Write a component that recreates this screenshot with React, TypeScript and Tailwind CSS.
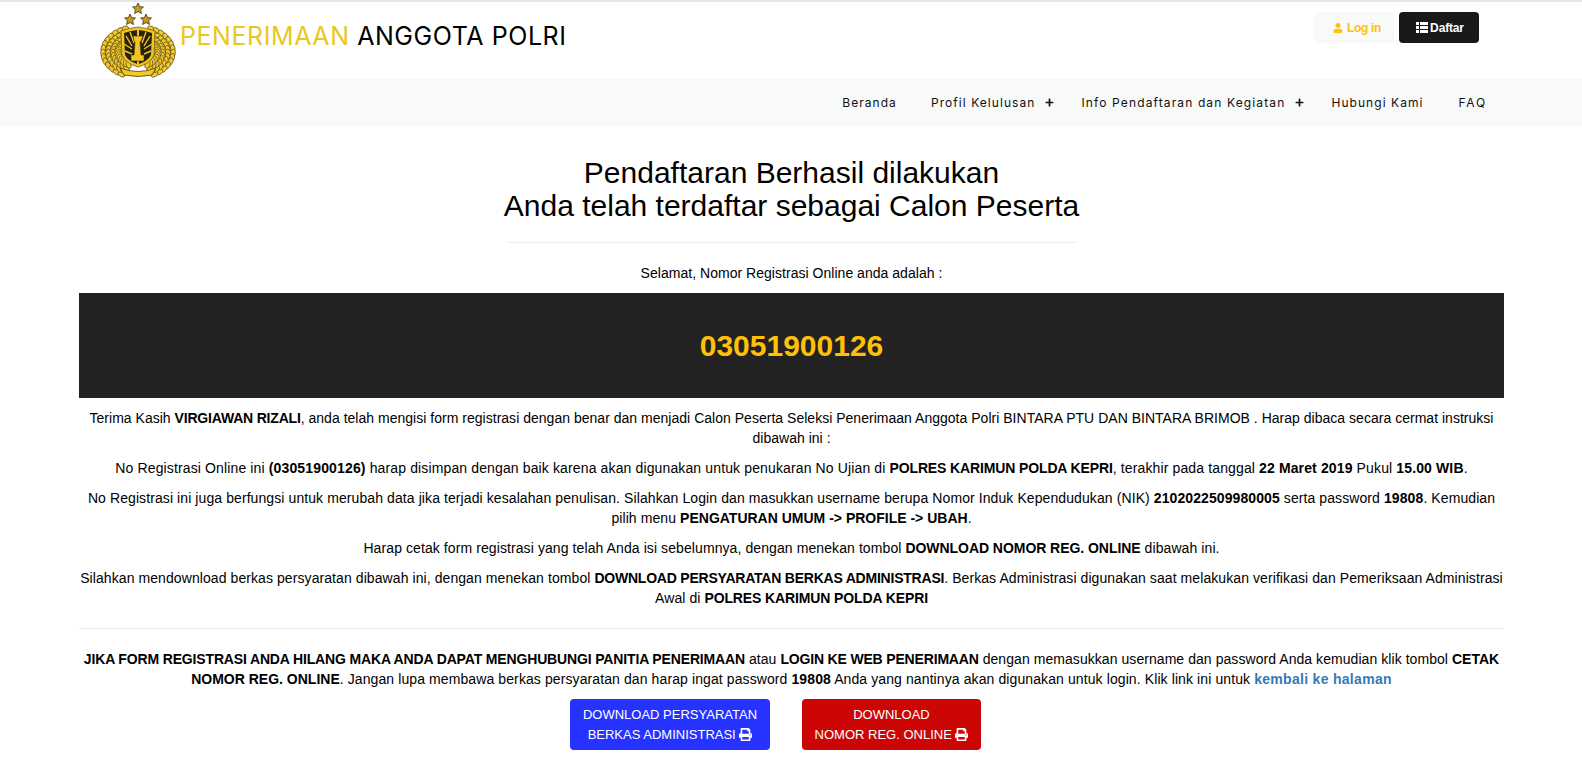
import type { ReactNode } from 'react';
import { FaUser, FaPrint, FaPlus } from 'react-icons/fa';

const STAR = 'l1.6 3.6 3.9.4-2.9 2.6.8 3.9-3.4-2-3.4 2 .8-3.9-2.9-2.6 3.9-.4z';

// wreath leaves, rows following the arc round the shield
const leaves: { x: number; y: number; r: number }[] = [];
[35, 30, 25, 20].forEach((radius, row) => {
  for (let a = 112; a <= 248; a += 10) {
    const rad = (a * Math.PI) / 180;
    leaves.push({
      x: 38 + Math.cos(rad) * radius,
      y: 52 - Math.sin(rad) * radius * 0.72,
      r: 180 - a + row * 14,
    });
  }
});

function Logo() {
  return (
    <svg width="80" height="78" viewBox="0 0 80 78" className="shrink-0 -mt-[2px]">
      <path d={`M38 3${STAR}`} fill="#c79a1e" stroke="#3a3010" strokeWidth="0.8" />
      <path d={`M30 14${STAR}`} fill="#c79a1e" stroke="#3a3010" strokeWidth="0.8" />
      <path d={`M46 14${STAR}`} fill="#c79a1e" stroke="#3a3010" strokeWidth="0.8" />
      {leaves.map((l, i) => (
        <g key={i}>
          <ellipse cx={l.x} cy={l.y} rx="2.4" ry="3.8" transform={`rotate(${l.r} ${l.x} ${l.y})`} fill="#f4cb2e" stroke="#5a4a1a" strokeWidth="0.7" />
          <ellipse cx={76 - l.x} cy={l.y} rx="2.4" ry="3.8" transform={`rotate(${-l.r} ${76 - l.x} ${l.y})`} fill="#f4cb2e" stroke="#5a4a1a" strokeWidth="0.7" />
        </g>
      ))}
      <path d="M20 68q18 7 36 0l-4 7q-14 3-28 0z" fill="#f5c928" stroke="#4a3d14" strokeWidth="0.8" />
      <path d="M21 31q8-3 17-4 9 1 17 4l-1 24q-3 8-16 12-13-4-16-12z" fill="#f3c520" stroke="#7a6318" strokeWidth="0.8" />
      <path d="M24 33q6-2 13-3l0 34q-9-3-12-9z M39 30q7 1 13 3l-1 22q-3 6-12 9z" fill="#262113" />
      <path d="M26 36l6 10M30 32l4 11M50 36l-6 10M46 32l-4 11M24 44l8 5M52 44l-8 5M25 51l7 3M51 51l-7 3" stroke="#f3c520" strokeWidth="1.4" />
      <path d="M33 36h10l-2 5-1 1 1 13h3v6h-13v-6h3l1-13-1-1z" fill="#f3c520" stroke="#3a3010" strokeWidth="0.6" />
    </svg>
  );
}

function ListIcon() {
  return (
    <svg width="12" height="11" viewBox="0 0 12 11" fill="currentColor" className="shrink-0">
      <path d="M0 0h3v3H0zM4 0h8v3H4zM0 4h3v3H0zM4 4h8v3H4zM0 8h3v3H0zM4 8h8v3H4z" />
    </svg>
  );
}

const Strong = ({ children, className = '' }: { children: ReactNode; className?: string }) => (
  <b className={`font-bold ${className}`}>{children}</b>
);

function Nav() {
  const itemClass = "font-['Inter',sans-serif] text-[12px] text-[#111] leading-none";
  return (
    <nav className="h-[47px] bg-[#f8f9f9] flex items-center justify-end pr-[95px]">
      <a className={`${itemClass} tracking-[1.06px] mr-[34px]`}>Beranda</a>
      <a className={`${itemClass} tracking-[1.06px]`}>Profil Kelulusan</a>
      <FaPlus className="text-[9px] text-[#111] ml-[10px] mr-[27px]" />
      <a className={`${itemClass} tracking-[1.13px]`}>Info Pendaftaran dan Kegiatan</a>
      <FaPlus className="text-[9px] text-[#111] ml-[10px] mr-[27px]" />
      <a className={`${itemClass} tracking-[1.06px] mr-[35px]`}>Hubungi Kami</a>
      <a className={`${itemClass} tracking-[1.8px]`}>FAQ</a>
    </nav>
  );
}

export default function App() {
  return (
    <div className="min-h-[766px] bg-white font-['Liberation_Sans',Arial,sans-serif] text-[14px] leading-[20px] text-black border-t-2 border-[#e6e6e6]">
      {/* Header */}
      <header className="h-[77px] flex justify-between">
        <div className="ml-[100px] flex items-start">
          <Logo />
          <span className="font-['Inter',sans-serif] text-[25px] leading-none mt-[22px] tracking-[0.56px] whitespace-nowrap">
            <span className="text-[#e8c81f]">PENERIMAAN</span> <span className="text-black">ANGGOTA POLRI</span>
          </span>
        </div>
        <div className="mr-[103px] mt-[10px] flex gap-[5px] items-start">
          <a className="h-[31px] w-[80px] pl-[6px] rounded bg-[#f8f9f9] text-[#ffc107] text-[12px] tracking-[-0.3px] font-bold flex items-center justify-center gap-[4px]">
            <FaUser className="text-[10px]" /> Log in
          </a>
          <a className="h-[31px] w-[80px] pl-[2px] rounded bg-[#191919] text-white text-[12px] tracking-[-0.15px] font-bold flex items-center justify-center gap-[2px]">
            <ListIcon /> Daftar
          </a>
        </div>
      </header>

      <Nav />

      <main className="ml-[79px] mr-[78px] text-center pt-[30px]">
        <h1 className="text-[30px] leading-[33px] font-normal">
          Pendaftaran Berhasil dilakukan
          <br />
          Anda telah terdaftar sebagai Calon Peserta
        </h1>
        <hr className="w-[570px] mx-auto mt-[20px] mb-[20px] border-[#eee]" />
        <p className="mb-[10px] tracking-[0.03px]">Selamat, Nomor Registrasi Online anda adalah :</p>

        <div className="h-[105px] bg-[#222] flex items-center justify-center mb-[10px]">
          <span className="text-[#ffc107] text-[30px] font-bold">03051900126</span>
        </div>

        <p className="mb-[10px] tracking-[0.02px]">
          Terima Kasih <Strong className="tracking-[-0.19px]">VIRGIAWAN RIZALI</Strong>, anda telah mengisi form registrasi dengan benar dan menjadi Calon Peserta Seleksi Penerimaan Anggota Polri BINTARA PTU DAN BINTARA BRIMOB . Harap dibaca secara cermat instruksi dibawah ini :
        </p>
        <p className="mb-[10px] tracking-[0.13px]">
          No Registrasi Online ini <Strong className="tracking-[0.15px]">(03051900126)</Strong> harap disimpan dengan baik karena akan digunakan untuk penukaran No Ujian di <Strong className="tracking-[-0.13px]">POLRES KARIMUN POLDA KEPRI</Strong>, terakhir pada tanggal <Strong>22 Maret 2019</Strong> Pukul <Strong>15.00 WIB</Strong>.
        </p>
        <p className="mb-[10px] tracking-[0.09px]">
          No Registrasi ini juga berfungsi untuk merubah data jika terjadi kesalahan penulisan. Silahkan Login dan masukkan username berupa Nomor Induk Kependudukan (NIK) <Strong>2102022509980005</Strong> serta password <Strong>19808</Strong>. Kemudian
          <br />
          pilih menu <Strong className="tracking-normal">PENGATURAN UMUM -&gt; PROFILE -&gt; UBAH</Strong>.
        </p>
        <p className="mb-[10px] tracking-[0.09px]">
          Harap cetak form registrasi yang telah Anda isi sebelumnya, dengan menekan tombol <Strong className="tracking-[-0.05px]">DOWNLOAD NOMOR REG. ONLINE</Strong> dibawah ini.
        </p>
        <p className="mb-[10px] tracking-[0.08px]">
          Silahkan mendownload berkas persyaratan dibawah ini, dengan menekan tombol <Strong className="tracking-[-0.22px]">DOWNLOAD PERSYARATAN BERKAS ADMINISTRASI</Strong>. Berkas Administrasi digunakan saat melakukan verifikasi dan Pemeriksaan Administrasi Awal di <Strong className="tracking-[-0.12px]">POLRES KARIMUN POLDA KEPRI</Strong>
        </p>

        <hr className="mt-[20px] mb-[20px] border-[#eee]" />

        <p className="mb-[10px] tracking-[0.06px]">
          <Strong className="tracking-[-0.15px]">JIKA FORM REGISTRASI ANDA HILANG MAKA ANDA DAPAT MENGHUBUNGI PANITIA PENERIMAAN</Strong> atau <Strong className="tracking-[-0.17px]">LOGIN KE WEB PENERIMAAN</Strong> dengan memasukkan username dan password Anda kemudian klik tombol <Strong className="tracking-normal">CETAK</Strong>
          <br />
          <span className="tracking-[0.1px]">
            <Strong className="tracking-normal">NOMOR REG. ONLINE</Strong>. Jangan lupa membawa berkas persyaratan dan harap ingat password <Strong>19808</Strong> Anda yang nantinya akan digunakan untuk login. Klik link ini untuk <a className="font-bold text-[#337ab7] tracking-[0.3px]">kembali ke halaman</a>
          </span>
        </p>

        <div className="flex justify-center gap-[32px] pr-[32px] text-[13px]">
          <a className="w-[200px] h-[51px] rounded bg-[#2632ff] text-white flex items-center justify-center">
            <span>
              DOWNLOAD PERSYARATAN
              <br />
              BERKAS ADMINISTRASI <FaPrint className="inline text-[13px] align-[-2px]" />
            </span>
          </a>
          <a className="w-[179px] h-[51px] rounded bg-[#cc0505] text-white flex items-center justify-center">
            <span>
              DOWNLOAD
              <br />
              NOMOR REG. ONLINE <FaPrint className="inline text-[13px] align-[-2px]" />
            </span>
          </a>
        </div>
      </main>
    </div>
  );
}
